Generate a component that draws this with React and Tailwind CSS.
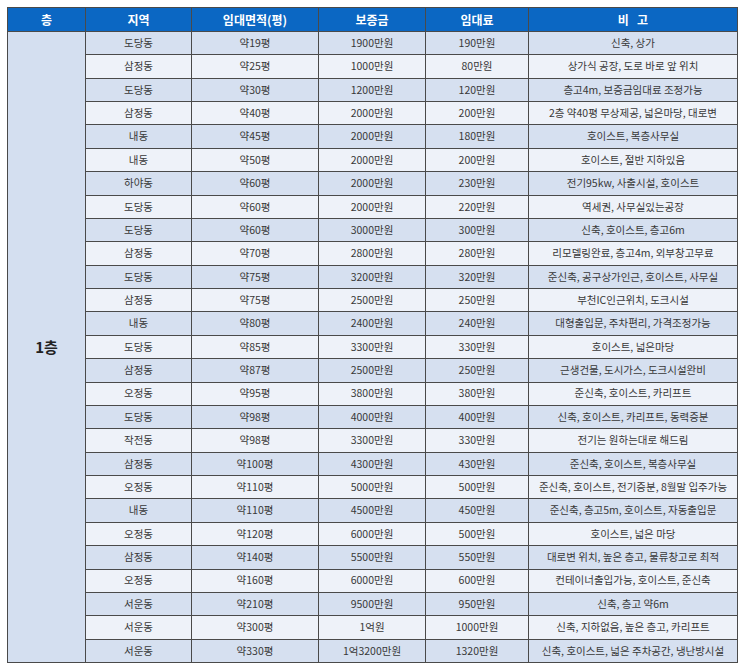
import React from "react";

const rows = [
  ["도당동", "약19평", "1900만원", "190만원", "신축, 상가"],
  ["삼정동", "약25평", "1000만원", "80만원", "상가식 공장, 도로 바로 앞 위치"],
  ["도당동", "약30평", "1200만원", "120만원", "층고4m, 보증금임대료 조정가능"],
  ["삼정동", "약40평", "2000만원", "200만원", "2층 약40평 무상제공, 넓은마당, 대로변"],
  ["내동", "약45평", "2000만원", "180만원", "호이스트, 복층사무실"],
  ["내동", "약50평", "2000만원", "200만원", "호이스트, 절반 지하있음"],
  ["하야동", "약60평", "2000만원", "230만원", "전기95kw, 사출시설, 호이스트"],
  ["도당동", "약60평", "2000만원", "220만원", "역세권, 사무실있는공장"],
  ["도당동", "약60평", "3000만원", "300만원", "신축, 호이스트, 층고6m"],
  ["삼정동", "약70평", "2800만원", "280만원", "리모델링완료, 층고4m, 외부창고무료"],
  ["도당동", "약75평", "3200만원", "320만원", "준신축, 공구상가인근, 호이스트, 사무실"],
  ["삼정동", "약75평", "2500만원", "250만원", "부천IC인근위치, 도크시설"],
  ["내동", "약80평", "2400만원", "240만원", "대형출입문, 주차편리, 가격조정가능"],
  ["도당동", "약85평", "3300만원", "330만원", "호이스트, 넓은마당"],
  ["삼정동", "약87평", "2500만원", "250만원", "근생건물, 도시가스, 도크시설완비"],
  ["오정동", "약95평", "3800만원", "380만원", "준신축, 호이스트, 카리프트"],
  ["도당동", "약98평", "4000만원", "400만원", "신축, 호이스트, 카리프트, 동력증분"],
  ["작전동", "약98평", "3300만원", "330만원", "전기는 원하는대로 해드림"],
  ["삼정동", "약100평", "4300만원", "430만원", "준신축, 호이스트, 복층사무실"],
  ["오정동", "약110평", "5000만원", "500만원", "준신축, 호이스트, 전기증분, 8월말 입주가능"],
  ["내동", "약110평", "4500만원", "450만원", "준신축, 층고5m, 호이스트, 자동출입문"],
  ["오정동", "약120평", "6000만원", "500만원", "호이스트, 넓은 마당"],
  ["삼정동", "약140평", "5500만원", "550만원", "대로변 위치, 높은 층고, 물류창고로 최적"],
  ["오정동", "약160평", "6000만원", "600만원", "컨테이너출입가능, 호이스트, 준신축"],
  ["서운동", "약210평", "9500만원", "950만원", "신축, 층고 약6m"],
  ["서운동", "약300평", "1억원", "1000만원", "신축, 지하없음, 높은 층고, 카리프트"],
  ["서운동", "약330평", "1억3200만원", "1320만원", "신축, 호이스트, 넓은 주차공간, 냉난방시설"],
];

const headers = ["층", "지역", "임대면적(평)", "보증금", "임대료", "비\u00a0\u00a0\u00a0고"];

export default function App() {
  return (
    <div
      className="w-[743px] h-[669px] bg-white pt-[7px] pl-[7px]"
      style={{ fontFamily: '"Noto Sans CJK KR", "Noto Sans", sans-serif' }}
    >
      <div className="w-[731px] h-[656px] bg-[#4a4a4a] p-px grid gap-px grid-cols-[77px_105px_126px_106px_102px_208px] grid-rows-[23px_repeat(27,1fr)]">
        {headers.map((h) => (
          <div
            key={h}
            className="bg-[#0b67c3] text-white font-bold text-[12px] flex items-center justify-center leading-none"
          >
            {h}
          </div>
        ))}
        <div className="[grid-row:span_27] bg-[#d4dff0] flex items-center justify-center text-[15px] font-bold text-[#222]">
          1층
        </div>
        {rows.map((r, i) =>
          r.map((c, j) => (
            <div
              key={i + "-" + j}
              className={
                (i % 2 === 0 ? "bg-[#d6e0f0] " : "bg-[#eef2f9] ") +
                "flex items-center justify-center text-[10.5px] text-[#383838] leading-none whitespace-nowrap"
              }
            >
              {c}
            </div>
          ))
        )}
      </div>
    </div>
  );
}
